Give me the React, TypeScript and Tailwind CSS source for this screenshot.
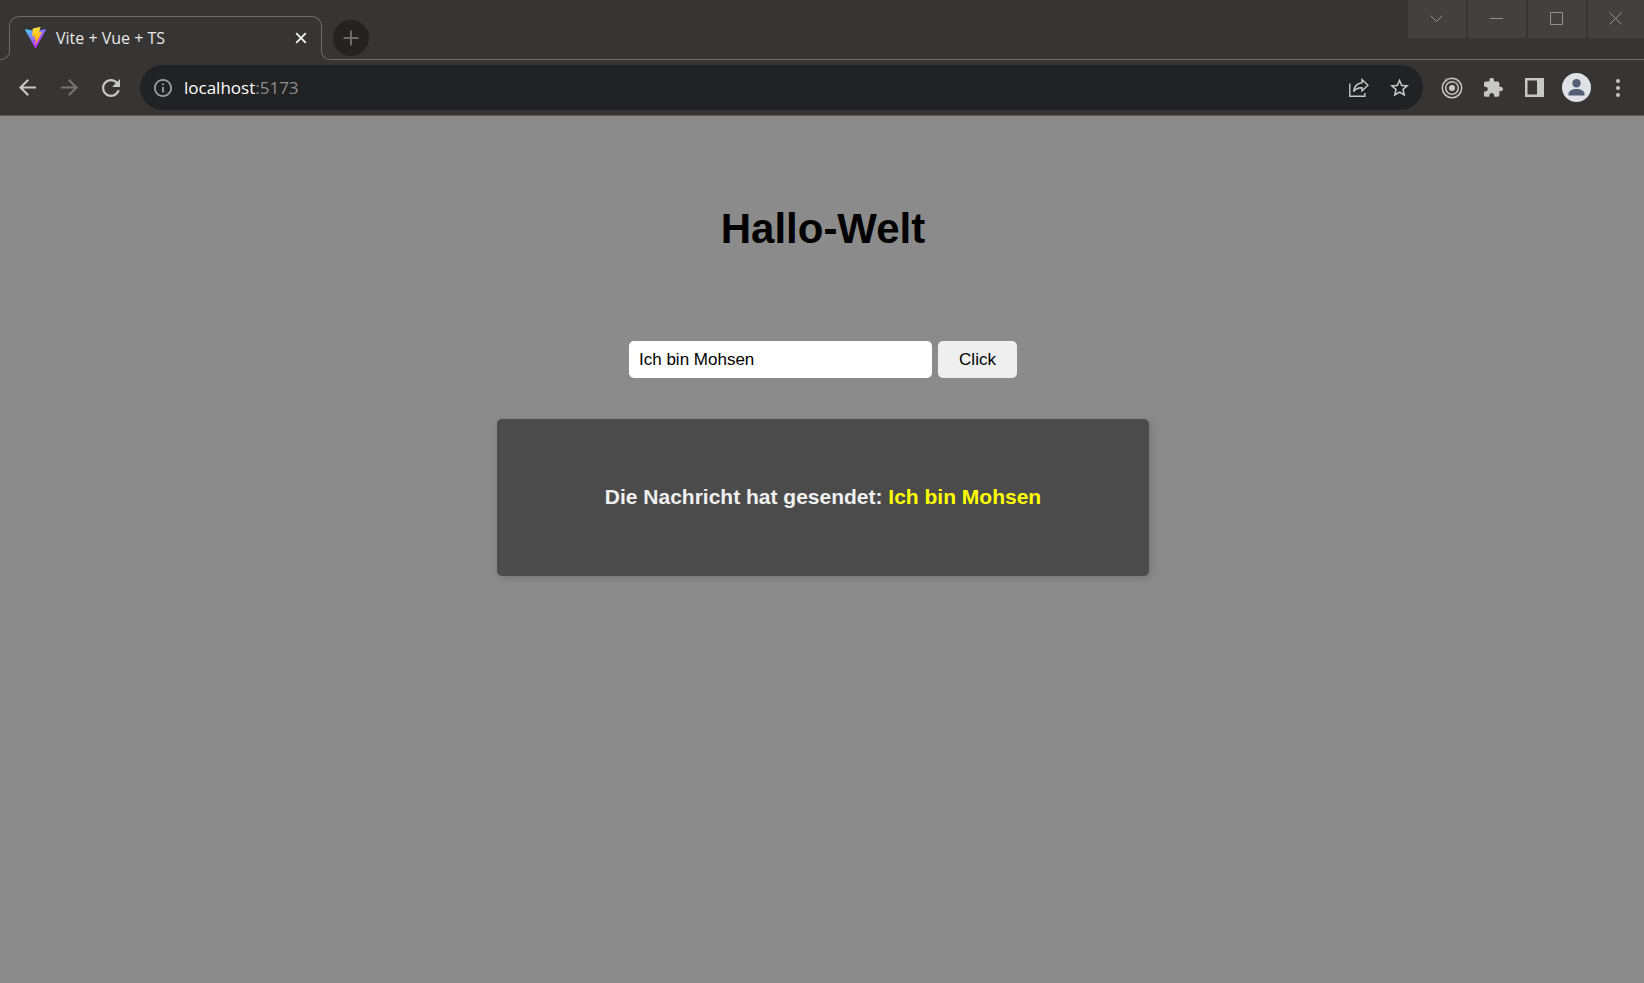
import { useState } from "react";
import type { FormEvent, ReactNode } from "react";

const uiFont = "font-['Open_Sans','Noto_Sans',sans-serif]";

function ViteLogo() {
  return (
    <svg viewBox="0 0 256 257" className="size-[21px] shrink-0" aria-hidden="true">
      <defs>
        <linearGradient id="viteBody" x1="-.828%" x2="57.636%" y1="7.652%" y2="78.411%">
          <stop offset="0%" stopColor="#41D1FF" />
          <stop offset="100%" stopColor="#BD34FE" />
        </linearGradient>
        <linearGradient id="viteBolt" x1="43.376%" x2="50.316%" y1="2.242%" y2="89.03%">
          <stop offset="0%" stopColor="#FFEA83" />
          <stop offset="8.333%" stopColor="#FFDD35" />
          <stop offset="100%" stopColor="#FFA800" />
        </linearGradient>
      </defs>
      <path
        fill="url(#viteBody)"
        d="M255.153 37.938L134.897 252.976c-2.483 4.44-8.862 4.466-11.382.048L.875 37.958c-2.746-4.814 1.371-10.646 6.827-9.67l120.385 21.517a6.537 6.537 0 0 0 2.322-.004l117.867-21.483c5.438-.991 9.574 4.796 6.877 9.62Z"
      />
      <path
        fill="url(#viteBolt)"
        d="M185.432.063L96.44 17.501a3.268 3.268 0 0 0-2.634 3.014l-5.474 92.456a3.268 3.268 0 0 0 3.997 3.378l24.777-5.718c2.318-.535 4.413 1.507 3.936 3.838l-7.361 36.047c-.495 2.426 1.782 4.5 4.151 3.78l15.304-4.649c2.372-.72 4.652 1.36 4.15 3.788l-11.698 56.621c-.732 3.542 3.979 5.473 5.943 2.437l1.313-2.028l72.516-144.72c1.215-2.423-.88-5.186-3.54-4.672l-25.505 4.922c-2.396.462-4.435-1.77-3.759-4.114l16.646-57.705c.677-2.35-1.37-4.583-3.769-4.113Z"
      />
    </svg>
  );
}

function WindowButton({ label, children }: { label: string; children: ReactNode }) {
  return (
    <button
      type="button"
      aria-label={label}
      className="flex h-[38px] w-[58px] items-center justify-center bg-[#42413f] pr-px pb-px text-[#92918f] last:w-14"
    >
      <svg viewBox="0 0 13 13" className="size-[13px]" fill="none" stroke="currentColor" aria-hidden="true">
        {children}
      </svg>
    </button>
  );
}

function TabStrip() {
  return (
    <header className="flex h-[60px] items-end">
      <div className="size-[10px] rounded-br-[9px] border-r border-b border-[#6d6c6a]" />
      <div className="-mx-px mb-[10px] flex h-[34px] w-[313px] items-center rounded-t-[10px] border border-b-0 border-[#6d6c6a] pt-2 pr-[14px] pl-[15px]">
        <ViteLogo />
        <span className="ml-[10px] flex-1 text-base leading-5 text-[#e8e8e8]">Vite + Vue + TS</span>
        <button type="button" aria-label="Close tab" className="text-[#f1f1f1]">
          <svg viewBox="0 0 12 12" className="size-3" fill="none" stroke="currentColor" strokeWidth="1.9" aria-hidden="true">
            <path d="M1.2 1.2l9.6 9.6M10.8 1.2L1.2 10.8" />
          </svg>
        </button>
      </div>
      <div className="size-[10px] rounded-bl-[9px] border-b border-l border-[#6d6c6a]" />
      <div className="flex h-[60px] flex-1 items-start justify-between border-b border-[#6d6c6a] pl-0.5">
        <button
          type="button"
          aria-label="New tab"
          className="mt-5 flex size-9 items-center justify-center rounded-full bg-[#242321] text-[#6c6b69]"
        >
          <svg viewBox="0 0 16 16" className="size-4" fill="none" stroke="currentColor" strokeWidth="2" aria-hidden="true">
            <path d="M8 .5v15M.5 8h15" />
          </svg>
        </button>
        <div className="flex gap-0.5">
          <WindowButton label="Search tabs">
            <path d="M.5 3.500l6 6l6-6" />
          </WindowButton>
          <WindowButton label="Minimize">
            <path d="M0 6.500h13" />
          </WindowButton>
          <WindowButton label="Maximize">
            <path d="M.5 .5h12v12H.5z" />
          </WindowButton>
          <WindowButton label="Close">
            <path d="M.5 .5l12 12M12.500 .5L.5 12.500" />
          </WindowButton>
        </div>
      </div>
    </header>
  );
}

function ToolButton({ label, className = "", children }: { label: string; className?: string; children: ReactNode }) {
  return (
    <button type="button" aria-label={label} className={`flex h-10 items-center justify-center ${className}`}>
      {children}
    </button>
  );
}

function Toolbar() {
  return (
    <nav className="flex h-14 items-center gap-2 border-b border-[#5c5b59] pr-[5px] pl-[7px] text-[#c7c7c6]">
      <div className="grid w-[125px] grid-cols-3">
        <ToolButton label="Back">
          <svg viewBox="4 4 16 16" className="size-[17px]" fill="currentColor" aria-hidden="true">
            <path d="M20 11H7.83l5.59-5.59L12 4l-8 8 8 8 1.41-1.41L7.83 13H20v-2z" />
          </svg>
        </ToolButton>
        <ToolButton label="Forward" className="text-[#757472]">
          <svg viewBox="4 4 16 16" className="size-[17px]" fill="currentColor" aria-hidden="true">
            <path d="M12 4l-1.41 1.41L16.17 11H4v2h12.17l-5.58 5.59L12 20l8-8z" />
          </svg>
        </ToolButton>
        <ToolButton label="Reload">
          <svg viewBox="4 4 16 16" className="size-[18px]" fill="currentColor" aria-hidden="true">
            <path d="M17.65 6.35C16.2 4.9 14.21 4 12 4c-4.42 0-7.99 3.58-7.99 8s3.57 8 7.99 8c3.73 0 6.84-2.55 7.73-6h-2.08c-.82 2.33-3.04 4-5.65 4-3.31 0-6-2.69-6-6s2.69-6 6-6c1.66 0 3.14.69 4.22 1.78L13 11h7V4l-2.35 2.35z" />
          </svg>
        </ToolButton>
      </div>

      <div className="flex h-[45px] flex-1 items-center rounded-full bg-[#212224] pr-[3px] pl-[14px]">
        <svg viewBox="2 2 20 20" className="size-[18px]" fill="#9aa0a6" aria-hidden="true">
          <path d="M11 7h2v2h-2zm0 4h2v6h-2zm1-9C6.48 2 2 6.48 2 12s4.480 10 10 10 10-4.480 10-10S17.520 2 12 2zm0 18c-4.410 0-8-3.590-8-8s3.590-8 8-8 8 3.590 8 8-3.590 8-8 8z" />
        </svg>
        <a href="#page" className="ml-3 flex-1 text-[17px] leading-6 text-white">
          localhost<span className="text-[#8d8e90]">:5173</span>
        </a>
        <ToolButton label="Share" className="w-[41px]">
          <svg viewBox="0 0 20 20" className="size-5" fill="none" stroke="currentColor" strokeWidth="1.4" aria-hidden="true">
            <path d="M.8 5.600V18.300H15.800V15" />
            <path d="M13 1.500L19 7.200L13 12.800V9.700C9 9.500 6.500 10.800 4.600 13.600C5.200 8.600 8 5.200 13 4.700Z" />
          </svg>
        </ToolButton>
        <ToolButton label="Bookmark this tab" className="w-[41px]">
          <svg viewBox="2 2 20 19" className="size-[19px]" fill="currentColor" aria-hidden="true">
            <path d="M22 9.240l-7.190-.62L12 2 9.190 8.630 2 9.240l5.460 4.730L5.820 21 12 17.270 18.180 21l-1.630-7.030L22 9.240zM12 15.400l-3.760 2.270 1-4.280-3.320-2.880 4.380-.38L12 6.100l1.710 4.040 4.380.38-3.320 2.880 1 4.280L12 15.400z" />
          </svg>
        </ToolButton>
      </div>

      <div className="grid w-52 grid-cols-5">
        <ToolButton label="Recorder">
          <svg viewBox="0 0 22 22" className="size-[22px]" fill="none" stroke="currentColor" strokeWidth="1.5" aria-hidden="true">
            <circle cx="11" cy="11" r="9.700" />
            <circle cx="11" cy="11" r="6.300" />
            <circle cx="11" cy="11" r="3" fill="currentColor" stroke="none" />
            <path d="M4 2.500L9 1.200M13 5l4 2" stroke="#8b8a88" />
          </svg>
        </ToolButton>
        <ToolButton label="Extensions">
          <svg viewBox="2 1.500 21 20.500" className="size-[19px]" fill="currentColor" aria-hidden="true">
            <path d="M20.500 11H19V7c0-1.100-.9-2-2-2h-4V3.500C13 2.120 11.880 1 10.500 1S8 2.120 8 3.500V5H4c-1.100 0-1.990.9-1.990 2v3.800H3.500c1.490 0 2.700 1.210 2.700 2.700s-1.210 2.700-2.700 2.700H2V20c0 1.100.9 2 2 2h3.800v-1.500c0-1.490 1.210-2.700 2.700-2.700 1.490 0 2.700 1.210 2.700 2.700V22H17c1.100 0 2-.9 2-2v-4h1.500c1.380 0 2.500-1.120 2.500-2.500S21.880 11 20.500 11z" />
          </svg>
        </ToolButton>
        <ToolButton label="Side panel">
          <svg viewBox="0 0 19 19" className="size-[19px]" fill="currentColor" fillRule="evenodd" aria-hidden="true">
            <path d="M0 0h19v19H0zM2.500 2.500v14H12v-14z" />
          </svg>
        </ToolButton>
        <ToolButton label="Profile">
          <svg viewBox="0 0 29 29" className="size-[29px]" aria-hidden="true">
            <circle cx="14.500" cy="14.500" r="14.500" fill="#dee1e6" />
            <circle cx="14.500" cy="10.300" r="4.200" fill="#535f75" />
            <path d="M6.500 22.500v-1.800c0-3 4-4.700 8-4.700s8 1.700 8 4.700v1.800z" fill="#535f75" />
          </svg>
        </ToolButton>
        <ToolButton label="Menu">
          <svg viewBox="0 0 4 18" className="h-[18px] w-1" fill="currentColor" aria-hidden="true">
            <circle cx="2" cy="2" r="2" />
            <circle cx="2" cy="9" r="2" />
            <circle cx="2" cy="16" r="2" />
          </svg>
        </ToolButton>
      </div>
    </nav>
  );
}

export default function App() {
  const [draft, setDraft] = useState("Ich bin Mohsen");
  const [message, setMessage] = useState("Ich bin Mohsen");

  const send = (event: FormEvent) => {
    event.preventDefault();
    setMessage(draft);
  };

  return (
    <div className="flex min-h-screen flex-col">
      <div className={`bg-[#373533] ${uiFont}`}>
        <TabStrip />
        <Toolbar />
      </div>
      <main
        id="page"
        className="flex flex-1 flex-col items-center bg-[#8b8b8b] pt-[89px] pl-0.5 font-['Liberation_Sans',Arial,sans-serif]"
      >
        <h1 className="text-[42px] leading-[48px] font-bold text-black">Hallo-Welt</h1>
        <form onSubmit={send} className="mt-[88px] flex gap-1.5 text-[17px] leading-5 text-black">
          <input
            type="text"
            aria-label="Nachricht"
            value={draft}
            onChange={(event) => setDraft(event.target.value)}
            className="h-[37px] w-[303px] rounded-[5px] bg-white px-[10px] outline-none"
          />
          <button type="submit" className="h-[37px] w-[79px] rounded-[5px] bg-[#efefef]">
            Click
          </button>
        </form>
        <section className="mt-[41px] flex h-[157px] w-full max-w-[652px] items-center justify-center rounded-[5px] bg-[#4b4b4b] pb-0.5 shadow-[2px_2px_8px_rgba(0,0,0,0.15)]">
          <p className="text-[21px] leading-6 font-bold text-[#f0f0f0]">
            Die Nachricht hat gesendet: <span className="text-[#ffff00]">{message}</span>
          </p>
        </section>
      </main>
    </div>
  );
}
